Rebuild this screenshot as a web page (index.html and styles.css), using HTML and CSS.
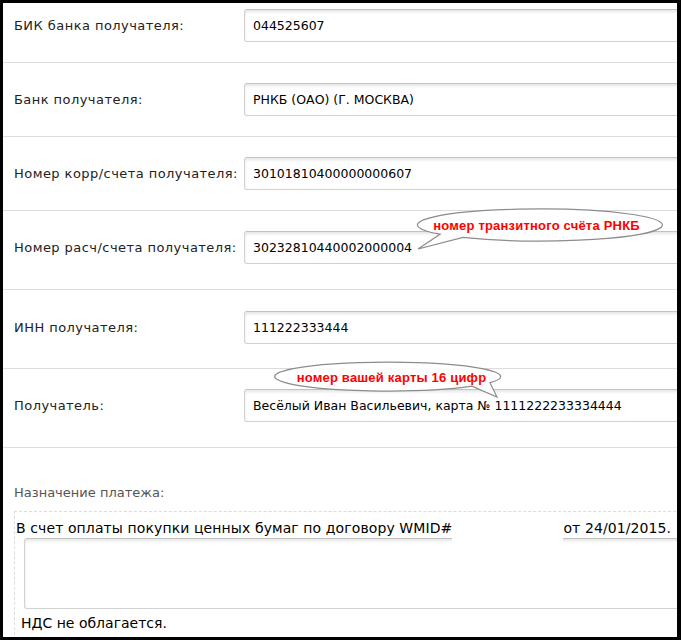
FILE: index.html
```html
<!DOCTYPE html>
<html lang="ru">
<head>
<meta charset="utf-8">
<title>Реквизиты</title>
<link rel="stylesheet" href="styles.css">
</head>
<body>
<div class="frame">
  <div class="row r1"><div class="label">БИК банка получателя:</div><div class="field">044525607</div></div>
  <div class="row"><div class="label">Банк получателя:</div><div class="field">РНКБ (ОАО) (Г. МОСКВА)</div></div>
  <div class="row"><div class="label">Номер корр/счета получателя:</div><div class="field">30101810400000000607</div></div>
  <div class="row r4"><div class="label">Номер расч/счета получателя:</div><div class="field">30232810440002000004</div></div>
  <div class="row r5"><div class="label">ИНН получателя:</div><div class="field">111222333444</div></div>
  <div class="row r6"><div class="label">Получатель:</div><div class="field">Весёлый Иван Васильевич, карта № 1111222233334444</div></div>
  <div class="purpose">
    <div class="plabel">Назначение платежа:</div>
    <div class="pbox">
      <div class="pline">В счет оплаты покупки ценных бумаг по договору WMID#<span class="wmid"></span>от 24/01/2015.</div>
      <div class="ptext"></div>
      <div class="pfoot">НДС не облагается.</div>
    </div>
  </div>
  <svg class="callouts" width="681" height="640" viewBox="0 0 681 640">
    <path class="bubble" d="M463,237.4 A122.5,16 0 1,0 440,234.2 L418,249 Z"/>
    <text class="btext" x="536.5" y="229.5">номер транзитного счёта РНКБ</text>
    <path class="bubble" d="M490,382.7 A113,14.5 0 1,0 472,386.2 L497,397 Z"/>
    <text class="btext" x="391.5" y="381.5">номер вашей карты 16 цифр</text>
  </svg>
</div>
</body>
</html>
```

FILE: styles.css
```css
html, body {
  margin: 0;
  padding: 0;
  background: #000;
}

.frame {
  position: relative;
  margin: 3px 4px 3px 3px;
  height: 634px;
  background: #fff;
  overflow: hidden;
  font-family: "DejaVu Sans", Verdana, sans-serif;
  font-size: 13px;
  color: #222;
}

.row {
  display: flex;
  align-items: center;
  padding: 20px 0 20px 11px;
  border-bottom: 1px solid #dcdcdc;
}

.r1 { padding-top: 6px; }
.r4 { padding-bottom: 25px; }
.r5 { padding-top: 21px; padding-bottom: 24px; }
.r6 { padding-bottom: 25px; }

.label {
  width: 230px;
  flex-shrink: 0;
  line-height: 16px;
  letter-spacing: 0.45px;
  white-space: nowrap;
}

.field {
  flex-shrink: 0;
  width: 460px;
  height: 33px;
  box-sizing: border-box;
  padding-left: 8px;
  line-height: 31px;
  font-size: 12.5px;
  color: #000;
  white-space: nowrap;
  border: 1px solid #d2d2d2;
  border-top-color: #c2c2c2;
  border-radius: 3px;
  box-shadow: inset 0 2px 3px rgba(0, 0, 0, 0.10);
}

.purpose {
  padding: 37px 0 0 11px;
}

.plabel {
  line-height: 16px;
  color: #555;
}

.pbox {
  margin-top: 10px;
  width: 700px;
  height: 200px;
  border: 1px dashed #dcdcdc;
  padding-top: 8px;
  font-size: 14px;
}

.pline {
  position: relative;
  line-height: 16px;
  padding-left: 1px;
  letter-spacing: 0.1px;
  color: #000;
  white-space: nowrap;
}

.wmid {
  display: inline-block;
  position: relative;
  width: 111px;
  height: 1px;
}

.wmid::after {
  content: "";
  position: absolute;
  left: 0;
  right: 0;
  top: -10px;
  height: 28px;
  background: #fff;
  z-index: 2;
}

.ptext {
  margin: 2px 0 0 9px;
  width: 680px;
  height: 71px;
  box-sizing: border-box;
  border: 1px solid #d2d2d2;
  border-top-color: #c2c2c2;
  border-radius: 3px;
  box-shadow: inset 0 2px 3px rgba(0, 0, 0, 0.10);
}

.pfoot {
  margin-top: 6px;
  padding-left: 6px;
  line-height: 16px;
  color: #000;
}

.callouts {
  position: absolute;
  left: -3px;
  top: -3px;
  z-index: 3;
}

.bubble {
  fill: #fff;
  stroke: #8c8c8c;
  stroke-width: 1.2;
}

.btext {
  font-family: "Liberation Sans", Arial, sans-serif;
  font-weight: bold;
  font-size: 13px;
  letter-spacing: 0.2px;
  fill: #f00;
  text-anchor: middle;
}
```
